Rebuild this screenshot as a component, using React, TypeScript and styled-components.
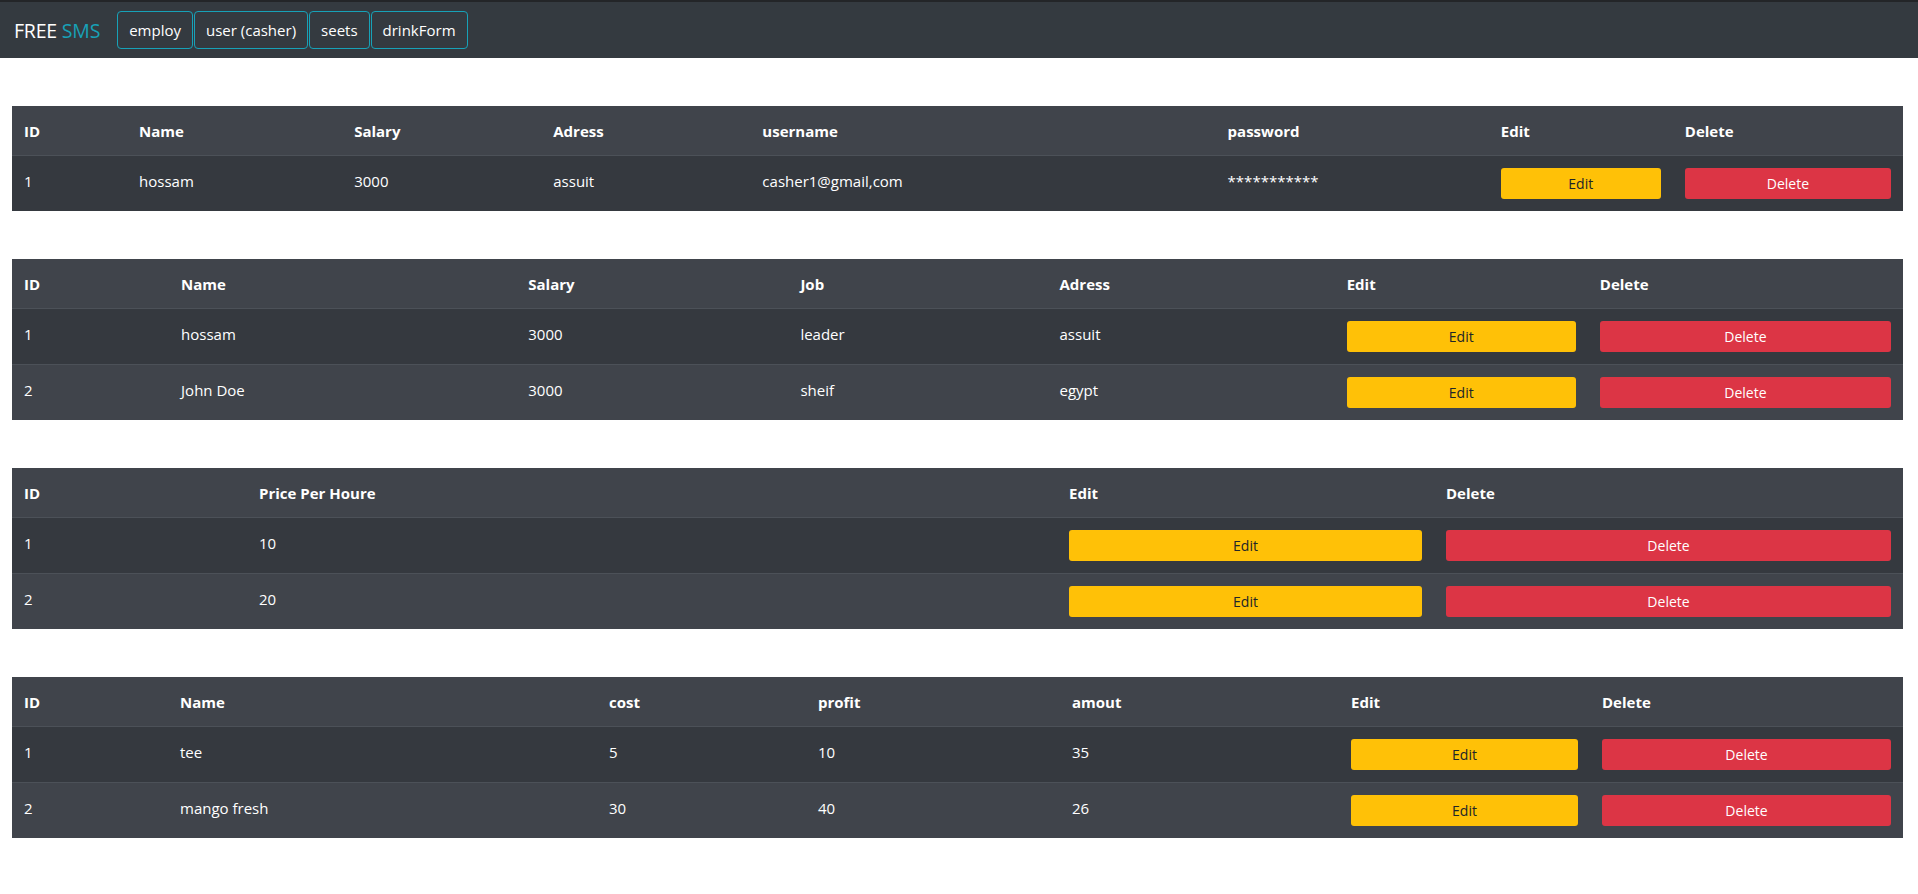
import styled, { createGlobalStyle } from "styled-components"

const GlobalStyle = createGlobalStyle`
    body {
        margin: 0;
        background: #fff;
        font-family: "Open Sans", "Noto Sans", sans-serif;
    }
`

const NavBar = styled.nav`
    display: flex;
    align-items: center;
    height: 56px;
    padding: 0 14px;
    background: #343a40;
    border-top: 2px solid #232528;
`

const Brand = styled.div`
    font-size: 19.5px;
    color: #fff;
    margin-right: 17px;
    letter-spacing: -0.2px;
`

const Accent = styled.span`
    color: #17a2b8;
`

const NavLinks = styled.div`
    display: flex;
    gap: 1px;
`

const NavButton = styled.button`
    font-family: inherit;
    font-size: 15px;
    line-height: 24px;
    color: #fff;
    background: transparent;
    border: 1px solid #17a2b8;
    border-radius: 4px;
    padding: 6px 11px;
    cursor: pointer;
`

const Main = styled.main`
    display: flex;
    flex-direction: column;
    gap: 48px;
    padding: 48px 15px 48px 12px;
`

const Table = styled.table`
    width: 100%;
    border-collapse: collapse;
    table-layout: fixed;
    color: #fff;
    font-size: 15px;
`

const Col = styled.col<{ $w: number }>`
    width: ${(p) => p.$w}px;
`

const Th = styled.th`
    text-align: left;
    font-weight: 700;
    line-height: 22px;
    padding: 14px 12px 13px;
    background: #40444b;
    border-bottom: 1px solid #4c5158;
`

const Tr = styled.tr`
    background: #35393f;
    &:nth-child(even) {
        background: #40444b;
    }
    & + & {
        border-top: 1px solid #4c5158;
    }
`

const Td = styled.td`
    vertical-align: top;
    padding: 13px 12px 12px;
    line-height: 24px;
    white-space: nowrap;
`

const ActionCell = styled.td`
    vertical-align: top;
    padding: 12px;
`

const ActionButton = styled.button<{ $kind: "edit" | "delete" }>`
    display: block;
    width: 100%;
    height: 31px;
    border: none;
    border-radius: 3px;
    font-family: inherit;
    font-size: 14px;
    cursor: pointer;
    background: ${(p) => (p.$kind === "edit" ? "#ffc107" : "#dc3545")};
    color: ${(p) => (p.$kind === "edit" ? "#212529" : "#fff")};
`

type TableData = {
    columns: string[]
    widths: number[]
    rows: string[][]
}

const tables: TableData[] = [
    {
        columns: ["ID", "Name", "Salary", "Adress", "username", "password"],
        widths: [115, 215, 199, 209, 465, 273, 184, 230],
        rows: [["1", "hossam", "3000", "assuit", "casher1@gmail,com", "***********"]],
    },
    {
        columns: ["ID", "Name", "Salary", "Job", "Adress"],
        widths: [157, 347, 272, 259, 287, 253, 315],
        rows: [
            ["1", "hossam", "3000", "leader", "assuit"],
            ["2", "John Doe", "3000", "sheif", "egypt"],
        ],
    },
    {
        columns: ["ID", "Price Per Houre"],
        widths: [235, 810, 377, 469],
        rows: [
            ["1", "10"],
            ["2", "20"],
        ],
    },
    {
        columns: ["ID", "Name", "cost", "profit", "amout"],
        widths: [156, 429, 209, 254, 279, 251, 313],
        rows: [
            ["1", "tee", "5", "10", "35"],
            ["2", "mango fresh", "30", "40", "26"],
        ],
    },
]

function DataTable({ data }: { data: TableData }) {
    return (
        <Table>
            <colgroup>
                {data.widths.map((w, i) => (
                    <Col key={i} $w={w} />
                ))}
            </colgroup>
            <thead>
                <tr>
                    {data.columns.map((c) => (
                        <Th key={c}>{c}</Th>
                    ))}
                    <Th>Edit</Th>
                    <Th>Delete</Th>
                </tr>
            </thead>
            <tbody>
                {data.rows.map((row, r) => (
                    <Tr key={r}>
                        {row.map((cell, i) => (
                            <Td key={i}>{cell}</Td>
                        ))}
                        <ActionCell>
                            <ActionButton $kind="edit">Edit</ActionButton>
                        </ActionCell>
                        <ActionCell>
                            <ActionButton $kind="delete">Delete</ActionButton>
                        </ActionCell>
                    </Tr>
                ))}
            </tbody>
        </Table>
    )
}

export default function App() {
    return (
        <>
            <GlobalStyle />
            <NavBar>
                <Brand>
                    FREE <Accent>SMS</Accent>
                </Brand>
                <NavLinks>
                    <NavButton>employ</NavButton>
                    <NavButton>user (casher)</NavButton>
                    <NavButton>seets</NavButton>
                    <NavButton>drinkForm</NavButton>
                </NavLinks>
            </NavBar>
            <Main>
                {tables.map((t, i) => (
                    <DataTable key={i} data={t} />
                ))}
            </Main>
        </>
    )
}
